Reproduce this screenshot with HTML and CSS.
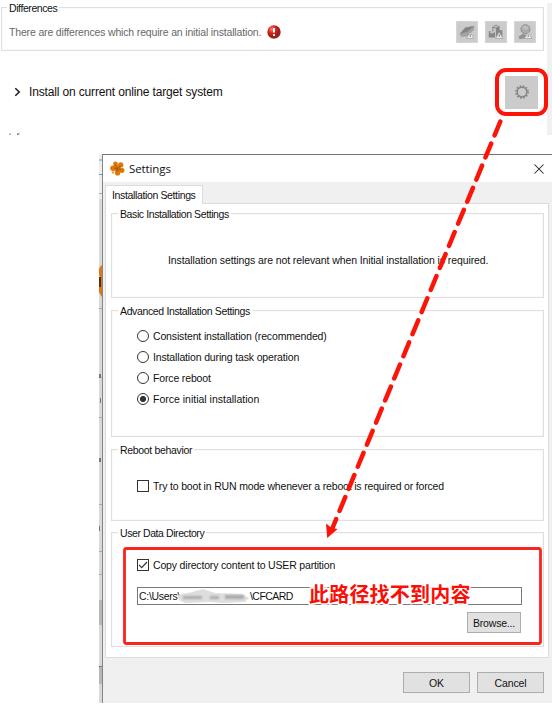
FILE: index.html
```html
<!DOCTYPE html>
<html lang="en">
<head>
<meta charset="utf-8">
<title>Settings</title>
<link rel="stylesheet" href="styles.css">
</head>
<body>
<div class="page">
  <section class="top">
    <div class="top-main">
      <div class="group differences">
        <span class="legend"><span class="t-diff">Differences</span></span>
        <span class="message">There are differences which require an initial installation.</span>
        <svg class="error" viewBox="0 0 14 14"><defs><radialGradient id="r" cx=".35" cy=".3"><stop offset="0" stop-color="#f68b80"/><stop offset=".6" stop-color="#df1c12"/><stop offset="1" stop-color="#9d211b"/></radialGradient></defs><circle cx="7" cy="7" r="6.7" fill="url(#r)"/><path d="M7 3v4.6M7 9v2" stroke="#fff" stroke-width="2"/></svg>
        <div class="tools">
          <span class="tool"><svg viewBox="0 0 22 22"><path d="M3 13 9 6l10-2-5 9-8 3z" fill="#858585"/><path d="m3 13 8-2 8-7v4l-7 8H4z" fill="#a2a2a2"/><path d="m14.500 11 4 7h-8z" fill="#eee" stroke="#999" stroke-width=".7"/><path d="M14.500 13.500v3" stroke="#777"/></svg></span>
          <span class="tool"><svg viewBox="0 0 22 22"><path d="m7 5 4-2 4 2v6H7zM3 10h7v7H3zM11 9h7v8h-7z" fill="#868686"/><path d="m7 5 4-1 3 1-3 1zM3 11l3-1 4 1-3 2zM8 7h3v4H8z" fill="#c4c4c4"/><path d="m14.500 11 4 7h-8z" fill="#eee" stroke="#999" stroke-width=".7"/><path d="M14.500 13.500v3" stroke="#777"/></svg></span>
          <span class="tool"><svg viewBox="0 0 22 22"><circle cx="11.500" cy="8" r="5" fill="#aaa" stroke="#8c8c8c"/><path d="M8 6c2-3 5-2 7 0l-2 3-3-1z" fill="#bebebe"/><path d="m4 16 5-3 4 2-2 3-6 1z" fill="#929292"/><path d="m14.500 11 4 7h-8z" fill="#eee" stroke="#999" stroke-width=".7"/><path d="M14.500 13.500v3" stroke="#777"/></svg></span>
        </div>
      </div>
      <div class="install">
        <svg class="chevron" viewBox="0 0 7 10"><path d="m1.300 1.200 3.900 3.800-3.900 3.800" fill="none" stroke="#222" stroke-width="1.600"/></svg>
        <span class="t-install">Install on current online target system</span>
        <span class="gear"><svg viewBox="0 0 16 16"><circle cx="8" cy="8" r="6.100" fill="none" stroke="#858585" stroke-width="1.600" stroke-dasharray="1.600 1.594"/><circle cx="8" cy="8" r="4.800" fill="none" stroke="#858585" stroke-width="1.500"/></svg></span>
      </div>
      <svg class="clipped" viewBox="0 0 12 3"><path d="M1 .5v1.500M10.500 .8H8.500V2" fill="none" stroke="#666"/></svg>
    </div>
    <div class="edge"></div>
  </section>

  <div class="desktop">
    <svg class="behind" viewBox="0 0 3 549"><path d="M0 0h3v549H0z" fill="#d9d9d9"/><path d="M0 0h3v45H0z" fill="#eee"/><path d="M0 6h3M0 20.500h3" stroke="#5aa3d8"/><path d="M0 39.500h3M0 154.500h3M0 223.500h3M0 263.500h3M0 350.500h3M0 397.500h3M0 420.500h3M0 455.500h3" stroke="#aaa"/><path d="M3 111c-4 3-4 8-2 12-4 5-3 14 2 20z" fill="#d87911"/><path d="M0 123h2v10H0z" fill="#51310c"/><path d="M0 220h2v4H0zM1 244h1v5H1zM0 304h2v4H0zM0 372h1v5H0z" fill="#777"/><path d="M0 446h3v25H0zM0 512h3v18H0z" fill="#b8b8b8"/><path d="M0 512.500h3" stroke="#777"/></svg>
    <main class="window">
      <header class="titlebar">
        <svg class="logo" viewBox="0 0 15 15"><g fill="#dd7908"><circle cx="5.500" cy="3" r="2.400"/><circle cx="10.700" cy="3.900" r="2.700"/><circle cx="11.800" cy="9.300" r="2.600"/><circle cx="7.600" cy="12" r="2.600"/><circle cx="2.900" cy="7.300" r="2.700"/><circle cx="7.500" cy="7.500" r="3.500"/></g><path d="m5 3.500 2.500 4 3-2.500M4 7l4 1 3 1M7 11V8" fill="none" stroke="#a85205" stroke-width="1"/><circle cx="3" cy="11.500" r="1.300" fill="#e7a044"/></svg>
        <h1>Settings</h1>
        <svg class="close" viewBox="0 0 10 10"><path d="m.5.5 9 9m0-9-9 9" stroke="#222" stroke-width="1.050"/></svg>
      </header>
      <div class="tab"><span class="t-tab">Installation Settings</span></div>
      <div class="panel">
        <section class="group basic">
          <span class="legend"><span class="t-basic">Basic Installation Settings</span></span>
          <span class="t-info">Installation settings are not relevant when Initial installation is required.</span>
        </section>
        <section class="group advanced">
          <span class="legend"><span class="t-adv">Advanced Installation Settings</span></span>
          <div class="option"><i class="radio"></i><span class="t-o1">Consistent installation (recommended)</span></div>
          <div class="option"><i class="radio"></i><span class="t-o2">Installation during task operation</span></div>
          <div class="option"><i class="radio"></i><span class="t-o3">Force reboot</span></div>
          <div class="option"><i class="radio on"></i><span class="t-o4">Force initial installation</span></div>
        </section>
        <section class="group reboot">
          <span class="legend"><span class="t-reb">Reboot behavior</span></span>
          <div class="option"><i class="check"></i><span class="t-try">Try to boot in RUN mode whenever a reboot is required or forced</span></div>
        </section>
        <section class="group user">
          <span class="legend"><span class="t-user">User Data Directory</span></span>
          <div class="option"><i class="check"><svg viewBox="0 0 10 10"><path d="m1 4.800 2.700 2.800L9 2" fill="none" stroke="#333" stroke-width="1.150"/></svg></i><span class="t-copy">Copy directory content to USER partition</span></div>
          <div class="path"><span class="t-path1">C:\Users\</span><svg class="smudge" viewBox="0 0 72 15"><path d="M0 6 14 3 25 0l12 4 27 1 7 4-4 4-22 1-13-1-25 1-6-3z" fill="#dedede"/><path d="M5 7h19v3H5zM32 7h9v3h-9zM47 6h19v4H47z" fill="#aaa" filter="url(#b)"/><defs><filter id="b" x="-10%" y="-100%" width="120%" height="300%"><feGaussianBlur stdDeviation="1.300"/></filter></defs></svg><span class="t-path2">\CFCARD</span></div>
          <div class="button browse"><span class="t-browse">Browse...</span></div>
        </section>
      </div>
      <footer>
        <div class="button wide"><span class="t-ok">OK</span></div>
        <div class="button wide"><span class="t-cancel">Cancel</span></div>
      </footer>
    </main>
  </div>

  <svg class="annotations" viewBox="0 0 552 705">
    <rect x="497" y="70" width="49" height="44" rx="9" fill="none" stroke="#fc1408" stroke-width="4"/>
    <rect x="124.500" y="548.500" width="416" height="95" rx="2" fill="none" stroke="#f9241c" stroke-width="2.800"/>
    <path d="M500.300 121.500 332.500 528" fill="none" stroke="#fc1408" stroke-width="4.500" stroke-linecap="round" stroke-dasharray="15 8.900"/>
    <path d="m326 523.500 1.200 14.500 10.500-9-6-1z" fill="#fc1408"/>
  </svg>
  <div class="note" lang="zh">此路径找不到内容</div>
</div>
</body>
</html>
```
FILE: styles.css
```css
* { box-sizing: border-box; }
body { margin: 0; background: #fff; color: #111; font: 10.5px/14px "Liberation Sans", Arial, sans-serif; }
.page { position: relative; width: 552px; height: 705px; overflow: hidden; }
svg { display: block; flex: none; }
span { white-space: nowrap; }

.group { position: relative; border: 1px solid #dfdfdf; box-shadow: inset 0 0 0 1px #fafafa; }
.legend { position: absolute; top: -7px; left: 6px; padding: 0 2px; line-height: 15px; background: #fff; }

.top { display: flex; height: 154px; padding-top: 3px; }
.top-main { width: 547px; }
.edge { width: 5px; height: 132px; background: #f0f0f0; }
.differences { display: flex; align-items: center; width: 543px; height: 44px; margin: 4px 0 0 1px; padding: 6px 7px 0; }
.differences .legend { left: 5px; }
.message { width: 258px; color: #686868; letter-spacing: -.16px; }
.error { width: 14px; height: 14px; }
.tools { display: flex; gap: 7px; margin-left: auto; }
.tool { width: 22px; height: 22px; background: #cbcbcb; border: 1px solid #d5d5d5; }
.install { display: flex; align-items: center; height: 34px; margin-top: 24px; padding: 0 9px 0 14px; }
.chevron { width: 7px; height: 10px; margin-right: 8px; }
.gear { display: flex; align-items: center; justify-content: center; width: 33px; height: 33px; margin-left: auto; background: #cbcbcb; }
.gear svg { width: 16px; height: 16px; }
.clipped { width: 12px; height: 3px; margin: 24px 0 0 9px; }

.t-diff { letter-spacing: -.42px; }
.t-install { font-size: 12px; letter-spacing: -.15px; }
.t-tab { letter-spacing: -.36px; }
.t-basic { letter-spacing: -.4px; }
.t-adv { letter-spacing: -.36px; }
.t-info { letter-spacing: -.1px; }
.t-o1, .t-o2, .t-o3 { letter-spacing: -.15px; }
.t-reb { letter-spacing: -.33px; }
.t-try, .t-copy { letter-spacing: -.175px; }
.t-user { letter-spacing: -.42px; }
.t-path1 { letter-spacing: -.3px; }
.t-path2 { letter-spacing: -.55px; }
.t-browse { letter-spacing: -.2px; }
.t-cancel { letter-spacing: -.15px; }

.desktop { display: flex; height: 549px; padding-left: 99px; }
.behind { width: 3px; height: 549px; }
.window { width: 450px; background: #f0f0f0; border-top: 1px solid #747474; border-left: 1px solid #858585; }
.titlebar { display: flex; align-items: center; height: 27px; padding: 0 8px 0 7px; background: #fff; }
.logo { width: 15px; height: 15px; margin-right: 4px; }
h1 { margin: 0; font: 11.5px/16px "Open Sans", "Noto Sans", sans-serif; letter-spacing: -.1px; }
.close { width: 10px; height: 10px; margin-left: auto; }
.tab { position: relative; z-index: 1; width: 98px; height: 19px; margin: 3px 0 -1px 2px; padding: 2px 0 0 6px; background: #fff; border: 1px solid #dcdcdc; border-bottom: 0; }
.panel { width: 444px; height: 455px; margin-left: 2px; padding: 9px 4px 0 5px; background: #fff; border: 1px solid #dcdcdc; }
.basic { height: 85px; padding: 39px 0 0 56px; }
.advanced { height: 127px; margin-top: 12px; padding: 14px 0 0 25px; }
.reboot { height: 72px; margin-top: 12px; padding: 25px 0 0 25px; }
.user { height: 115px; margin-top: 11px; padding: 21px 0 0 25px; }
.option { display: flex; align-items: center; height: 21px; gap: 4px; }
.radio { width: 12px; height: 12px; border: 1px solid #333; border-radius: 50%; }
.on { background: radial-gradient(circle, #333 0 2.700px, #fff 3.400px); }
.check { width: 12px; height: 12px; border: 1px solid #333; }
.check svg { width: 10px; height: 10px; }
.path { display: flex; align-items: center; width: 385px; height: 18px; margin-top: 12px; padding-left: 1px; border: 1px solid #7a7a7a; }
.t-path1 { width: 41px; }
.smudge { width: 72px; height: 15px; margin-left: -2px; }
.button { display: flex; align-items: center; justify-content: center; height: 21px; background: #e1e1e1; border: 1px solid #adadad; }
.browse { width: 54px; margin: 7px 0 0 330px; }
footer { display: flex; gap: 7px; margin: 14px 0 0 300px; }
.wide { width: 67px; }

.annotations { position: absolute; inset: 0; width: 552px; height: 705px; }
.note { position: absolute; left: 309px; top: 580px; color: #fc0d05; font: bold 20px/28px "Noto Sans CJK SC", sans-serif; letter-spacing: .2px; white-space: nowrap; paint-order: stroke fill; -webkit-text-stroke: 3px #fff; }
```
